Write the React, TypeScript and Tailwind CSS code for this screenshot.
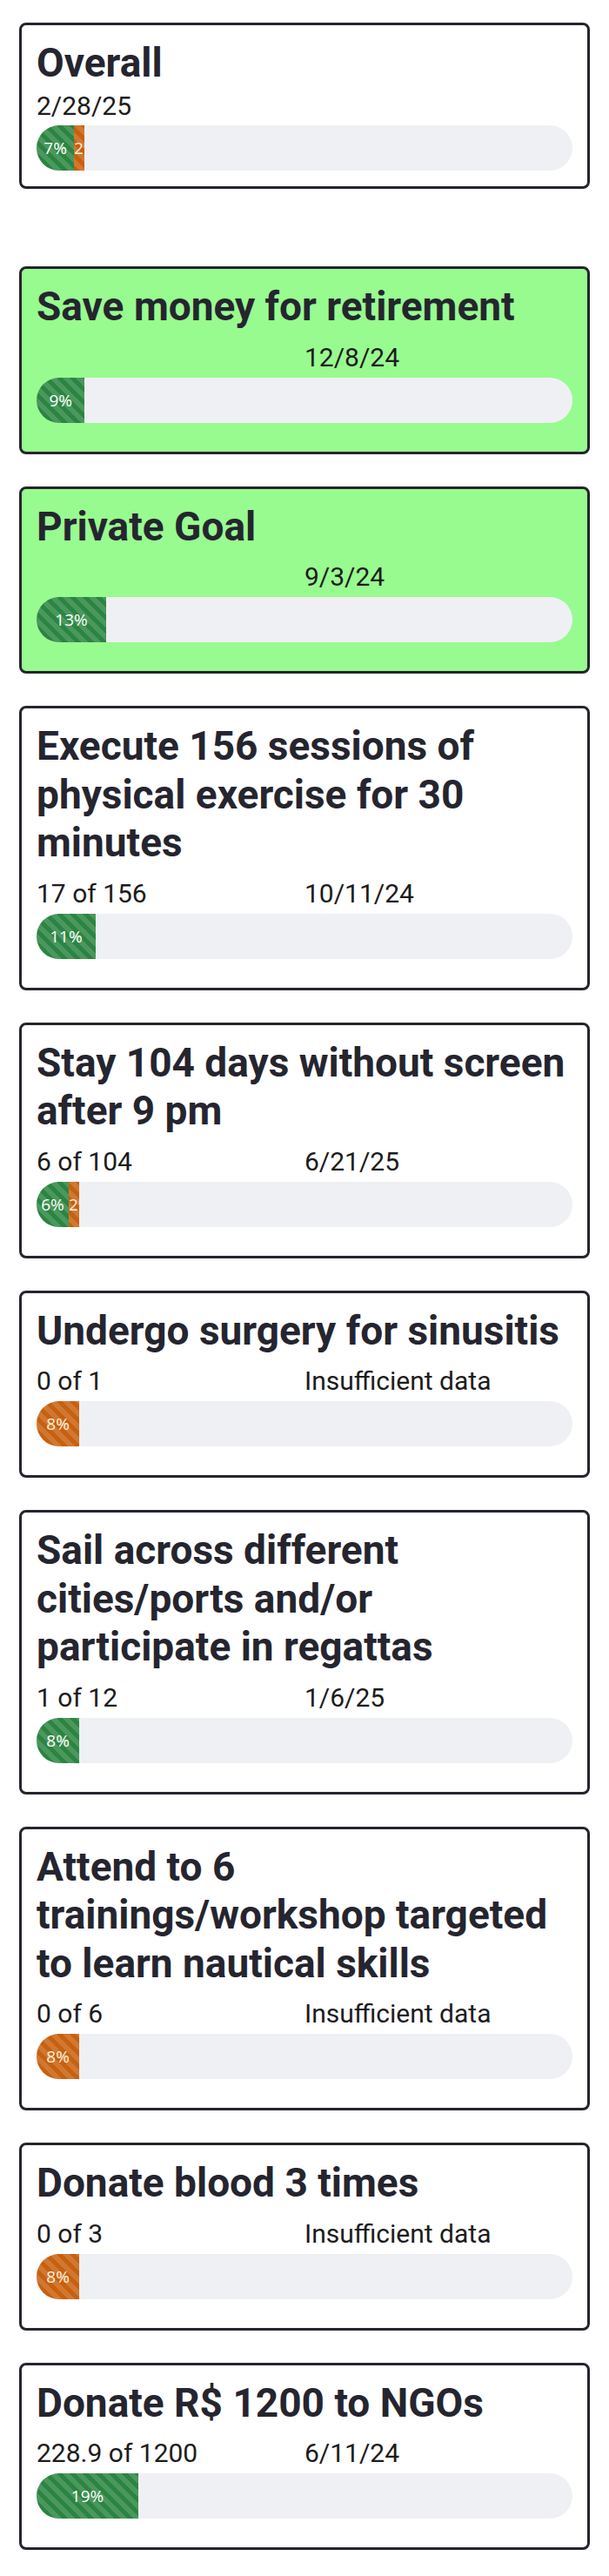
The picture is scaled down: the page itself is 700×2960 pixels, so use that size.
import React from "react";

type Seg = { pct: number; color: "green" | "orange" };
type Goal = {
  title: string;
  progress?: string;
  date: string;
  segs: Seg[];
  highlight?: boolean;
};

const goals: Goal[] = [
  { title: "Save money for retirement", date: "12/8/24", segs: [{ pct: 9, color: "green" }], highlight: true },
  { title: "Private Goal", date: "9/3/24", segs: [{ pct: 13, color: "green" }], highlight: true },
  { title: "Execute 156 sessions of physical exercise for 30 minutes", progress: "17 of 156", date: "10/11/24", segs: [{ pct: 11, color: "green" }] },
  { title: "Stay 104 days without screen after 9 pm", progress: "6 of 104", date: "6/21/25", segs: [{ pct: 6, color: "green" }, { pct: 2, color: "orange" }] },
  { title: "Undergo surgery for sinusitis", progress: "0 of 1", date: "Insufficient data", segs: [{ pct: 8, color: "orange" }] },
  { title: "Sail across different cities/ports and/or participate in regattas", progress: "1 of 12", date: "1/6/25", segs: [{ pct: 8, color: "green" }] },
  { title: "Attend to 6 trainings/workshop targeted to learn nautical skills", progress: "0 of 6", date: "Insufficient data", segs: [{ pct: 8, color: "orange" }] },
  { title: "Donate blood 3 times", progress: "0 of 3", date: "Insufficient data", segs: [{ pct: 8, color: "orange" }] },
  { title: "Donate R$ 1200 to NGOs", progress: "228.9 of 1200", date: "6/11/24", segs: [{ pct: 19, color: "green" }] },
];

function Bar({ segs, className }: { segs: Seg[]; className: string }) {
  return (
    <div className={`h-[52px] rounded-full bg-[#eff0f4] overflow-hidden flex ${className}`}>
      {segs.map((s, i) => (
        <div
          key={i}
          style={{ width: `${s.pct}%` }}
          className={`h-full shrink-0 overflow-hidden whitespace-nowrap text-center leading-[52px] text-[19px] [font-family:'Open_Sans',sans-serif] bg-[linear-gradient(45deg,rgba(255,255,255,.15)_25%,transparent_25%,transparent_50%,rgba(255,255,255,.15)_50%,rgba(255,255,255,.15)_75%,transparent_75%,transparent)] bg-[length:15px_15px] ${
            s.color === "green" ? "bg-[#2b8542] text-white" : "bg-[#c8600e] text-[#fff1dc]"
          }`}
        >
          {s.pct}%
        </div>
      ))}
    </div>
  );
}

function GoalCard({ g }: { g: Goal }) {
  return (
    <div
      className={`border-[3px] border-[#25252d] rounded-lg px-[17px] pt-[16px] pb-[33px] ${
        g.highlight ? "bg-[#98fb8f]" : "bg-white"
      }`}
    >
      <h2 className="text-[46px] leading-[55.5px] font-bold text-[#25252f]">{g.title}</h2>
      <div className="grid grid-cols-2 mt-[13px] text-[30px] leading-[34px] text-[#1c1c1c]">
        <div>{g.progress ?? ""}</div>
        <div>{g.date}</div>
      </div>
      <Bar segs={g.segs} className="mt-[6px]" />
    </div>
  );
}

export default function App() {
  return (
    <div className="min-h-screen bg-white px-[22px] pt-[26px] pb-[27px] [font-family:Roboto,'Liberation_Sans',sans-serif]">
      <div className="border-[3px] border-[#25252d] rounded-lg px-[17px] pt-[16px] pb-[18px] bg-white">
        <h1 className="text-[46px] leading-[55px] font-bold text-[#25252f]">Overall</h1>
        <div className="mt-[5px] text-[30px] leading-[34px] text-[#1c1c1c]">2/28/25</div>
        <Bar
          segs={[
            { pct: 7, color: "green" },
            { pct: 2, color: "orange" },
          ]}
          className="mt-[5px]"
        />
      </div>
      <div className="mt-[89px] flex flex-col gap-[37px]">
        {goals.map((g, i) => (
          <GoalCard key={i} g={g} />
        ))}
      </div>
    </div>
  );
}
